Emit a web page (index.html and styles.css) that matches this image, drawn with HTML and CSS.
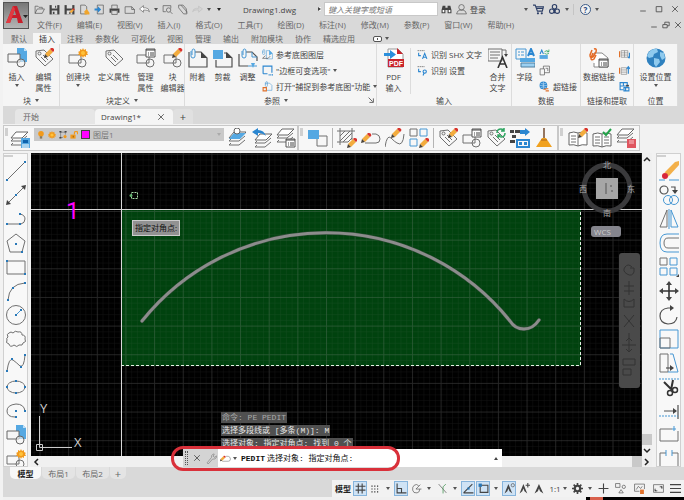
FILE: index.html
```
<!DOCTYPE html>
<html lang="zh-CN">
<head>
    <meta charset="UTF-8">
    <meta name="viewport" content="width=device-width, initial-scale=1.0">
    <title>Drawing1.dwg</title>
    <link rel="stylesheet" href="styles.css">
</head>
<body>
<svg class="sprite" aria-hidden="true">
    <defs>
        <!-- shared parts -->
        <g id="pencil">
            <path d="M1 6l5-5 3 3-5 5z" fill="#f3ac3e"/>
            <path d="M1 6l3 3-4 1z" fill="#4a4238"/>
            <path d="M6 1l1-1q2-.5 3 1t-.5 2.500L9 4z" fill="#d8322c"/>
        </g>
        <g id="stack">
            <path class="ln" fill="#fff" d="M1 13h10l6-5M1 13l2-2M1 17h10l6-5M1 17l2-2"/>
            <path d="M6 4h12l-6 6H1z" fill="#fff" stroke="#666"/>
        </g>
        <g id="tag">
            <path class="ln" d="M2 3l8-1 9 9-8 7-9-9z"/>
            <circle class="ln" cx="5.500" cy="5.500" r="1.500"/>
            <path class="ln" d="M7 9l5 5M9 7l5 5"/>
        </g>
        <g id="shape">
            <path class="ln" d="M1 7h12v8H1z"/>
            <circle class="ln" cx="14" cy="15" r="4"/>
        </g>
        <g id="sun">
            <path d="M5 0l1 2 2-1v2l2 1-1 1 1 2-2 0v2l-2-1-1 2-1-2-2 1V7L0 7l1-2-1-1 2-1V1l2 1z" fill="#f29a1c"/>
            <circle cx="5" cy="5" r="2" fill="#ffc23a"/>
        </g>
        <g id="note">
            <path d="M0 0h9v8H0z" fill="#fff" stroke="#555"/>
            <path d="M0 1h9M2 4h1M4 4h4M2 6h1M4 6h4" stroke="#444" fill="none"/>
        </g>
        <g id="clip">
            <path class="bl" d="M1 3v5q0 2 2 2t2-2V3q0-2-1.500-2T2 3v4"/>
        </g>

        <!-- quick access -->
        <symbol id="i-open" viewBox="0 0 20 20"><path class="dk" d="M2 17V4h5l2 2h6v3M2 17l4-8h13l-4 8z"/></symbol>
        <symbol id="i-save" viewBox="0 0 20 20"><path class="df" d="M1 2h18v17H1z"/><path d="M5 2h10v6H5zM5 12h10v7H5z" fill="#ddd"/><path class="df" d="M11 3h2v4h-2zM7 14h3v4H7z"/></symbol>
        <symbol id="i-saveas" viewBox="0 0 20 20"><path class="df" d="M1 2h18v17H1z"/><path d="M5 2h10v6H5zM5 12h10v7H5z" fill="#ddd"/><use href="#pencil" x="9" y="8"/></symbol>
        <symbol id="i-webopen" viewBox="0 0 20 20"><path class="dk" d="M3 2h8l3 3v13H3z" fill="#fff"/><path d="M10 13l4-4 5 7v3h-9z" fill="#f0a52c"/></symbol>
        <symbol id="i-websave" viewBox="0 0 20 20"><path class="dk" d="M6 2h11v16H6z"/><path d="M1 8h6V4l6 6-6 6v-4H1z" fill="#2b86d0"/></symbol>
        <symbol id="i-print" viewBox="0 0 20 20"><path class="dk" d="M5 8V2h10v6M5 12h10v7H5z"/><path class="df" d="M1 8h18v8h-3v-4H4v4H1z"/></symbol>
        <symbol id="i-page" viewBox="0 0 20 20"><path class="dk" d="M2 5h12l5 5v7H2z" fill="#fff"/><path class="dk" d="M14 5v5h5"/></symbol>
        <symbol id="i-undo" viewBox="0 0 20 20"><path d="M1 9l7-6v4h4q6 0 7 7-3-3-7-3H8v4z" fill="#fff" stroke="#444"/></symbol>
        <symbol id="i-redo" viewBox="0 0 20 20"><path d="M19 9l-7-5v4H8q-6 0-7 6 3-3 7-3h4v4z" fill="#d4d4d4" stroke="#bbb"/></symbol>
        <symbol id="i-preview" viewBox="0 0 20 20"><path class="dk" d="M2 14V3h14v5M2 14h5" fill="#fff"/><circle class="dk" cx="12" cy="11" r="4"/><path class="dk" d="M15 14l4 4"/></symbol>
        <symbol id="i-sheets" viewBox="0 0 20 20"><path class="dk" d="M3 2h8l6 7v7M3 2v5l9 11h6v-4L7 2"/></symbol>

        <!-- info bar -->
        <symbol id="i-find" viewBox="0 0 20 20"><path class="df" d="M3 3h5v4h4V3h5l2 8v6h-7v-6H8v6H1v-6z"/><path d="M3 11h3v4H3zM14 11h3v4h-3z" fill="#fff"/></symbol>
        <symbol id="i-user" viewBox="0 0 20 20"><circle class="dk" cx="10" cy="6" r="5"/><path class="dk" d="M1 18q1-6 6-7h6q5 1 6 7z"/></symbol>
        <symbol id="i-cart" viewBox="0 0 20 20"><path class="nv" d="M0 2h4l4 11h9l2-8H5M7 8h11"/><circle cx="9" cy="17" r="2" fill="#2c3e66"/><circle cx="16" cy="17" r="2" fill="#2c3e66"/></symbol>
        <symbol id="i-cloud" viewBox="0 0 20 20"><circle class="nv" cx="10" cy="5" r="4"/><circle class="nv" cx="5" cy="13" r="4"/><circle class="nv" cx="15" cy="13" r="4"/><path class="nv" d="M10 9v8"/></symbol>
        <symbol id="i-min" viewBox="0 0 20 20"><path class="dk2" d="M3 15h14"/></symbol>
        <symbol id="i-max" viewBox="0 0 20 20"><path class="dk2" d="M3 4h14v13H3z"/></symbol>
        <symbol id="i-restore" viewBox="0 0 20 20"><path class="dk2" d="M2 9h11v8H2zM7 9V3h11v9h-5"/></symbol>
        <symbol id="i-close" viewBox="0 0 20 20"><path class="dk2" d="M3 3l14 14M17 3L3 17"/></symbol>
        <symbol id="i-launch" viewBox="0 0 20 20"><path class="dk2" d="M4 4l10 10M16 6v10H6"/></symbol>

        <!-- scroll arrows -->
        <symbol id="i-up" viewBox="0 0 10 10"><path class="arrow" d="M2 7l3-3 3 3"/></symbol>
        <symbol id="i-down" viewBox="0 0 10 10"><path class="arrow" d="M2 3l3 3 3-3"/></symbol>
        <symbol id="i-left" viewBox="0 0 10 10"><path class="arrow" d="M7 2L4 5l3 3"/></symbol>
        <symbol id="i-right" viewBox="0 0 10 10"><path class="arrow" d="M3 2l3 3-3 3"/></symbol>

        <!-- ribbon -->
        <symbol id="i-insert" viewBox="0 0 20 20"><path class="bf" d="M10 0h7l3 3v11h-10z"/><path d="M17 0v3h3" fill="#bfe0f7"/><path d="M1 6h12v8H1z" fill="#f5f5f5" stroke="#666"/><circle cx="14" cy="15" r="4" fill="#f5f5f5" fill-opacity=".6" stroke="#666"/></symbol>
        <symbol id="i-tag" viewBox="0 0 20 20"><use href="#tag"/></symbol>
        <symbol id="i-tagedit" viewBox="0 0 20 20"><use href="#tag"/><use href="#pencil" x="10"/></symbol>
        <symbol id="i-tagsync" viewBox="0 0 20 20"><use href="#tag"/><path class="gr" d="M11 5q0-4 4-4 2 0 3 2M19 5q0 4-4 4-2 0-3-2M18 0v3h-3M12 10V7h3"/></symbol>
        <symbol id="i-create" viewBox="0 0 20 20"><use href="#shape"/><use href="#sun" x="10"/></symbol>
        <symbol id="i-manage" viewBox="0 0 20 20"><use href="#shape"/><use href="#note" x="10" y="1"/></symbol>
        <symbol id="i-blockedit" viewBox="0 0 20 20"><use href="#shape"/><use href="#pencil" x="9"/></symbol>
        <symbol id="i-attach" viewBox="0 0 20 20"><path class="dk" d="M1 4v15h18V10l-6-6H7"/><path class="df" d="M13 4v6h6z"/><use href="#clip" x="2"/></symbol>
        <symbol id="i-crop" viewBox="0 0 20 20"><path class="dk" d="M3 12v7h16V10l-5-5h-3"/><path class="df" d="M13 4v6h6z"/><path class="bf" d="M0 2h10v9H0z"/></symbol>
        <symbol id="i-adjust" viewBox="0 0 20 20"><path class="dk" d="M1 6v12h9M19 13V9l-5-5H8"/><path class="bl" d="M14 4v5h5M10 18h9"/><path class="bf" d="M13 15h4l-2 5z"/><use href="#clip" x="3"/></symbol>
        <symbol id="i-reflayer" viewBox="0 0 20 20"><path class="bl" d="M8 3h6l5 5v10H8z"/><path class="bf" d="M13 2l6 6-6 4z"/><path class="dk" d="M1 17h10l4-4M1 17l5-5"/><use href="#clip" x="0"/></symbol>
        <symbol id="i-frame" viewBox="0 0 20 20"><path class="bl2" d="M2 16V2h16v12M2 16h8"/><path class="bl2" stroke-dasharray="2 1" d="M12 18h8"/></symbol>
        <symbol id="i-snapref" viewBox="0 0 20 20"><path class="bl" d="M6 4h8l4 4v9H9"/><path d="M2 18v-6h6v6z" fill="none" stroke="#e0702a" stroke-width="2"/><use href="#clip" x="5"/></symbol>
        <symbol id="i-pdf" viewBox="0 0 20 20"><path d="M4 1h10l5 5v13H4z" fill="#fff" stroke="#999"/><path d="M13 0l6 6h-6z" fill="#c9242c"/><path d="M4 11h16v8H4z" fill="#c9242c"/><path d="M0 5h6V2l6 4.500L6 11V8H0z" fill="#2b8fdc"/><text x="5" y="18" class="pdftext">PDF</text></symbol>
        <symbol id="i-shx" viewBox="0 0 20 20"><path class="dk" stroke-dasharray="3 1" d="M1 3h13"/><path class="bl2" d="M3 7v5h4"/><path class="bl2" d="M10 18l4-10 4 10M12 15h4"/></symbol>
        <symbol id="i-shxset" viewBox="0 0 20 20"><path class="dk" stroke-dasharray="3 1" d="M1 3h13"/><path class="bl2" d="M3 7v5h4"/><circle class="bl2" cx="14" cy="12" r="3"/><path class="bl2" d="M11 19l2-5"/></symbol>
        <symbol id="i-merge" viewBox="0 0 20 20"><path class="ln" d="M0 1h14v12H0zM2 4h10M2 7h10M2 10h8M14 2h4v6"/><path class="df" d="M16 6h4l-2 3z"/><path d="M10 20l4.500-11L19 20M12 16h5" fill="none" stroke="#333" stroke-width="1.600"/></symbol>
        <symbol id="i-field" viewBox="0 0 20 20"><path class="bl" d="M1 1h10v10H1zM3 4h2M6 4h3M3 7h2M6 7h3"/><path class="bl2" d="M13 8l3-7 3 7M14 6h4"/><path class="bf" d="M5 10h15v4H5z"/><path d="M6 15h14v4H6z" fill="#9bd0f2" stroke="#4e7f9f"/></symbol>
        <symbol id="i-upd" viewBox="0 0 20 20"><path class="bf" d="M1 11h15v7H1z"/><path class="gr" d="M10 5q4-4 8 0M18 1v4h-4M10 8q4 3 8 0"/><path class="bl2" d="M2 9l3-7 3 7"/></symbol>
        <symbol id="i-ole" viewBox="0 0 20 20"><path class="dk" d="M2 7h8v11H2zM8 7V2h11v12h-9M12 6h4v5"/></symbol>
        <symbol id="i-link" viewBox="0 0 20 20"><circle cx="8" cy="8" r="7" fill="#2b86d0"/><path d="M1 8h14M8 1v14M3 4q5 3 10 0M3 12q5-3 10 0" fill="none" stroke="#cfe8fa"/><path d="M8 15h5M12 18h6M12 14h5" stroke="#e0702a" stroke-width="2"/></symbol>
        <symbol id="i-datalink" viewBox="0 0 20 20"><path d="M5 8V5h8l6 5v9H5v-4" fill="#fff" stroke="#888"/><path d="M5 1q3-1 2 3L4 9q-3 2-3-2l2-5M4 5l-2 5q0 3 3 1l2-4" fill="none" stroke="#e56a24" stroke-width="1.500"/><use href="#note" x="10" y="11"/></symbol>
        <symbol id="i-dl1" viewBox="0 0 20 20"><path class="ln" d="M4 3h12v12H4zM4 7h12M4 11h12M10 3v12"/><path d="M1 4v11" stroke="#e0702a" stroke-width="2"/><path class="bl2" d="M19 7v9M16 14l3 3"/></symbol>
        <symbol id="i-dl2" viewBox="0 0 20 20"><path class="ln" d="M4 5h10v12H4zM4 9h10M4 13h10"/><path d="M1 5v11" stroke="#e0702a" stroke-width="2"/><path class="bl2" d="M17 16V5M14 7l3-4 3 4"/></symbol>
        <symbol id="i-dl3" viewBox="0 0 20 20"><path class="bl2" d="M2 3h13v6H2zM8 3v6M2 9v7h6"/><path class="bl2" d="M9 12h9v6H9zM12 12v6"/><path class="df" d="M13 7h5v3h-5z"/></symbol>
        <symbol id="i-globe" viewBox="0 0 20 20"><circle cx="10" cy="10" r="9.500" fill="#2f81bf"/><path d="M3 4q4-4 8-3l1 3-4 2-1 3-4 1-2-2zM8 10l5 1 1 3-4 5-2-3zM14 4l4 1 1 5-3 2-2-4z" fill="#8fcaee"/></symbol>

        <!-- object toolbar -->
        <symbol id="i-layers" viewBox="0 0 20 20"><use href="#stack"/><path class="bf" d="M11 10h9v10h-9z"/><path d="M13 12h5v3h-5z" fill="#0d62ad"/><path d="M12 17h7M12 19h7" stroke="#fff"/></symbol>
        <symbol id="i-layercur" viewBox="0 0 20 20"><use href="#stack"/><path class="bf" d="M6 5h12l-6 6H1z"/><circle cx="9" cy="3" r="3" fill="#fff" stroke="#666"/></symbol>
        <symbol id="i-layerprev" viewBox="0 0 20 20"><use href="#stack" x="2" y="2"/><path d="M0 4l6-4v2q6 0 8 6-3-3-8-3v3z" fill="#2b86d0"/></symbol>
        <symbol id="i-layerstate" viewBox="0 0 20 20"><use href="#stack" y="-3"/><use href="#note" x="10" y="11"/></symbol>
        <symbol id="i-layerred" viewBox="0 0 20 20"><use href="#stack" y="-3"/><path d="M11 11h9v9h-9z" fill="#df5660"/><path d="M13 13h5M13 15h5" stroke="#fbc6ca"/></symbol>
        <symbol id="i-match" viewBox="0 0 20 20"><path class="ln" d="M9 8h10v10H9z"/><path class="bf" d="M0 2h11v9H0z"/></symbol>
        <symbol id="i-hatch" viewBox="0 0 20 20"><path class="ln" d="M3 0v17M15 0v12M0 3h18M0 14h11M3 8l5-5M3 13L13 3M6 14l9-9M11 14l4-4"/><use href="#pencil" x="10" y="10"/></symbol>
        <symbol id="i-pledit" viewBox="0 0 20 20"><path class="ln" d="M4 15h11q4 0 4-4t-4-5h-4"/><use href="#pencil" x="0" y="5"/></symbol>
        <symbol id="i-spledit" viewBox="0 0 20 20"><path class="ln" d="M0 19q2-13 6-9t6 5q6 4 7-9"/><use href="#pencil" x="6" y="0"/></symbol>
        <symbol id="i-arredit" viewBox="0 0 20 20"><path class="ln" d="M1 1h7v7H1z"/><path class="bl" d="M11 1h7v7h-7zM1 11h7v7H1z"/><use href="#pencil" x="10" y="10"/></symbol>
        <symbol id="i-list" viewBox="0 0 20 20"><path class="df" d="M0 2h4v3H0zM5 2h5v3H5zM2 7h4v3H2zM0 12h5v3H0z"/><path d="M10 2h5V0l5 4-5 4V6h-5z" fill="#2b86d0"/><path class="bl2" d="M7 12h12v7H7z"/><path d="M9 14h3v3H9zM14 14h3v3h-3z" fill="#2b86d0"/></symbol>
        <symbol id="i-broom" viewBox="0 0 20 20"><path d="M10 0v11" stroke="#754a2e" stroke-width="1.500"/><path d="M8 10h4l6 9H2z" fill="#f0a11f"/><path d="M7 12h6" stroke="#a9651c"/></symbol>
        <symbol id="i-book" viewBox="0 0 20 20"><path d="M1 5q5-2 9 0 4-2 9 0v12q-5-1-9 1-4-2-9-1z" fill="#fff" stroke="#666"/><path class="ln" d="M10 5v13M3 8h5M3 11h5M3 14h5"/><use href="#pencil" x="10"/></symbol>
        <symbol id="i-bookok" viewBox="0 0 20 20"><path d="M1 6q5-2 9 0 4-2 9 0v12q-5-1-9 1-4-2-9-1z" fill="#fff" stroke="#666"/><path class="ln" d="M10 6v13M3 9h5M3 12h5M3 15h5M12 9h5M12 12h5M12 15h5"/><path d="M11 4l3 3 5-6" fill="none" stroke="#23a34a" stroke-width="2"/></symbol>

        <!-- layer list -->
        <symbol id="i-bulb" viewBox="0 0 20 20"><circle cx="10" cy="7" r="7" fill="#f29a1c"/><path d="M7 13h6v6H7z" fill="#8a7a5c"/></symbol>
        <symbol id="i-sun" viewBox="0 0 10 10"><use href="#sun"/></symbol>
        <symbol id="i-vp" viewBox="0 0 20 20"><path class="dk" d="M4 2v14M4 3h12M16 3v6M4 16h6"/><path class="df" d="M1 0h5v4H1zM14 0h5v4h-5zM1 15h5v4H1z"/><circle cx="15" cy="14" r="4" fill="#f29a1c"/></symbol>
        <symbol id="i-lock" viewBox="0 0 20 20"><path d="M1 9h13v10H1z" fill="#f29a1c"/><path d="M11 9V5q0-4 4-4t4 4v3" fill="none" stroke="#f29a1c" stroke-width="3"/><path d="M7 12h2v4H7z" fill="#7b5214"/></symbol>

        <!-- draw toolbar -->
        <symbol id="i-line" viewBox="0 0 20 20"><path class="ln" d="M1 19L19 1"/><path class="pt" d="M0 18h2v2H0zM18 0h2v2h-2z"/></symbol>
        <symbol id="i-xline" viewBox="0 0 20 20"><path class="ln" d="M2 18L18 2"/><path class="df" d="M0 20l1-5 4 4zM20 0l-1 5-4-4z"/><path class="pt" d="M9 9h2v2H9z"/></symbol>
        <symbol id="i-pline" viewBox="0 0 20 20"><path class="ln" d="M1 15h14q4-1 4-5t-5-5"/><path class="pt" d="M0 14h2v2H0zM13 14h2v2h-2zM13 4h2v2h-2z"/></symbol>
        <symbol id="i-polygon" viewBox="0 0 20 20"><path class="ln" d="M10 1l9 7-3 11H4L1 8z"/><path class="pt" d="M9 10h2v2H9zM15 18h2v2h-2z"/></symbol>
        <symbol id="i-rect" viewBox="0 0 20 20"><path class="ln" d="M1 4h18v13H1z"/><path class="pt" d="M0 3h2v2H0zM18 16h2v2h-2z"/></symbol>
        <symbol id="i-arc" viewBox="0 0 20 20"><path class="ln" d="M2 19Q3 3 19 2"/><path class="pt" d="M1 18h2v2H1zM6 6h2v2H6zM18 1h2v2h-2z"/></symbol>
        <symbol id="i-circle" viewBox="0 0 20 20"><circle class="ln" cx="10" cy="10" r="9.500"/><path class="bl" d="M10 10l5-5"/><path class="pt" d="M9 9h2v2H9zM14 4h2v2h-2z"/></symbol>
        <symbol id="i-revcloud" viewBox="0 0 20 20"><path class="ln" d="M2 8q-2-3 1-4 2-2 4 0 2-3 5-1 4-1 4 3 4 0 3 4 2 3-2 4 0 3-4 2-2 3-5 0-4 3-5-1-4-1-2-4-1-2 1-3z"/></symbol>
        <symbol id="i-spline" viewBox="0 0 20 20"><path class="ln" d="M1 18Q3 4 7 7t7 6q4 2 5-11"/><path class="pt" d="M0 17h2v2H0zM5 5h2v2H5zM14 13h2v2h-2zM18 1h2v2h-2z"/></symbol>
        <symbol id="i-ellipse" viewBox="0 0 20 20"><ellipse class="ln" cx="10" cy="10" rx="9" ry="6"/><path class="pt" d="M0 9h2v2H0zM18 9h2v2h-2zM9 3h2v2H9zM9 15h2v2H9z"/></symbol>
        <symbol id="i-earc" viewBox="0 0 20 20"><path class="ln" d="M9 16Q1 16 1 10t9-7q8 0 9 7"/><path class="pt" d="M9 9h2v2H9zM18 9h2v2h-2zM9 15h2v2H9z"/></symbol>

        <!-- modify toolbar -->
        <symbol id="i-erase" viewBox="0 0 20 20"><path d="M5 12L16 1l4-1v4L9 16z" fill="#f3b04a"/><path d="M5 12l4 4" stroke="#fff" stroke-width="2"/><circle cx="6" cy="15" r="3" fill="#d8263a"/><path class="bl" d="M0 19h6M10 19h10"/></symbol>
        <symbol id="i-copy" viewBox="0 0 20 20"><circle class="dk" cx="5" cy="5" r="4"/><path class="dk" d="M12 2h4v4"/><path class="df" d="M13 5h6l-3 4z"/><circle class="bl" cx="9" cy="15" r="4.500"/><circle class="bl" cx="15" cy="15" r="4.500"/></symbol>
        <symbol id="i-mirror" viewBox="0 0 20 20"><path class="ln" d="M8 1v17H1z"/><path class="bl" d="M12 1v17h7z"/><path class="bl" d="M10 0v20"/></symbol>
        <symbol id="i-offset" viewBox="0 0 20 20"><path class="bl" d="M20 1H8Q1 1 1 10t7 9h12"/><path class="ln" d="M20 5H9q-4 0-4 5t4 5h11"/></symbol>
        <symbol id="i-array" viewBox="0 0 20 20"><path class="ln" d="M1 1h7v7H1z"/><path class="bl" d="M11 1h7v7h-7zM1 11h7v7H1zM11 11h7v7h-7z"/><path class="df" d="M17 20l3-3v3z"/></symbol>
        <symbol id="i-move" viewBox="0 0 20 20"><path d="M10 3v14M3 10h14" stroke="#333" stroke-width="1.600"/><path class="df" d="M10 0l3 4H7zM10 20l3-4H7zM0 10l4-3v6zM20 10l-4-3v6z"/></symbol>
        <symbol id="i-rotate" viewBox="0 0 20 20"><path class="dk" d="M12 3H9Q1 4 1 11t8 8q8 0 9-7"/><path class="df" d="M11 0l4 3-4 3z"/></symbol>
        <symbol id="i-scale" viewBox="0 0 20 20"><path class="bl" d="M1 1h18v18H1z"/><path class="ln" d="M1 9h10v10H1z"/></symbol>
        <symbol id="i-stretch" viewBox="0 0 20 20"><path class="ln" d="M9 1H1v18h8z"/><path class="bl" d="M11 1h3l5 18H9"/><path class="dk" d="M7 15h5"/><path class="df" d="M11 12l4 3-4 3z"/></symbol>
        <symbol id="i-trim" viewBox="0 0 20 20"><path class="bl" stroke-dasharray="2 1" d="M0 2h20"/><path d="M5 5l8 8M14 3l-2 10" stroke="#333" stroke-width="2"/><circle cx="11" cy="16" r="2.500" fill="none" stroke="#333" stroke-width="1.500"/><circle cx="16" cy="13" r="2.500" fill="none" stroke="#333" stroke-width="1.500"/></symbol>
        <symbol id="i-extend" viewBox="0 0 20 20"><path class="dk" d="M5 10h12M19 4v14"/><path class="df" d="M14 7l4 3-4 3z"/><path class="bl" stroke-dasharray="2 1" d="M0 15h19"/></symbol>
        <symbol id="i-breakpt" viewBox="0 0 20 20"><path class="ln" d="M13 4H1v12h18V6"/><path class="bl" d="M13 4h4M15 1v5"/></symbol>
        <symbol id="i-break" viewBox="0 0 20 20"><path class="ln" d="M7 4H1v16M13 4h6v16"/><path class="bl" d="M7 1v6M13 1v6"/></symbol>

        <!-- command line and status bar -->
        <symbol id="i-wrench" viewBox="0 0 20 20"><path class="ln" d="M2 18l8-10q-1-4 3-6l2 0-2 4 3 2 3-3q1 5-4 6l-3 0-8 9z"/></symbol>
        <symbol id="i-grid" viewBox="0 0 20 20"><path class="dk2" d="M6 1v18M13 1v18M1 6h18M1 13h18"/></symbol>
        <symbol id="i-dots" viewBox="0 0 20 20"><path d="M1 3h18M1 10h18M1 17h18" stroke="#333" stroke-width="3" stroke-dasharray="3 4"/></symbol>
        <symbol id="i-ortho" viewBox="0 0 20 20"><path class="dk2" d="M2 1v17h17M2 10h8v8"/></symbol>
        <symbol id="i-polar" viewBox="0 0 20 20"><path class="dk" d="M14 5Q10 1 6 4t-3 9 8 5q5-1 5-7M9 11l8-8M9 11h10"/></symbol>
        <symbol id="i-iso" viewBox="0 0 20 20"><path class="dk" d="M3 2l14 16"/><path d="M11 19V7l5-5" fill="none" stroke="#4e9a5c" stroke-width="1.500"/></symbol>
        <symbol id="i-track" viewBox="0 0 20 20"><path class="dk2" d="M1 18L17 2M1 18h18"/><path class="pt" d="M8 8h4v4H8z"/></symbol>
        <symbol id="i-osnap" viewBox="0 0 20 20"><path class="dk2" d="M4 4h14v13H4z"/><path class="pt" d="M1 1h6v6H1z"/></symbol>
        <symbol id="i-ann" viewBox="0 0 20 20"><path class="df" d="M9 2l8 17-6-4-2-5-2 5-6 4z"/></symbol>
        <symbol id="i-anno" viewBox="0 0 20 20"><path class="df" d="M8 2l7 17-5-4-2-5-2 5-5 4z"/><circle class="dk" cx="16" cy="4" r="3"/></symbol>
        <symbol id="i-annx" viewBox="0 0 20 20"><path class="df" d="M8 2l7 17-5-4-2-5-2 5-5 4z"/><path class="dk2" d="M16 0v8M12 4h8"/></symbol>
        <symbol id="i-gear" viewBox="0 0 20 20"><circle cx="10" cy="10" r="5" fill="none" stroke="#444" stroke-width="4"/><path d="M10 0v4M10 16v4M0 10h4M16 10h4M3 3l3 3M14 14l3 3M17 3l-3 3M3 17l3-3" stroke="#444" stroke-width="3"/></symbol>
        <symbol id="i-plus" viewBox="0 0 20 20"><path class="dk2" d="M10 1v18M1 10h18"/></symbol>
        <symbol id="i-isolate" viewBox="0 0 20 20"><path class="dk" d="M1 1h8v7H1zM7 18l4-6 4 6z"/><circle class="dk" cx="16" cy="7" r="3"/></symbol>
        <symbol id="i-hw" viewBox="0 0 20 20"><path class="dk" d="M1 2h18v9M1 2v13h9M4 12l4-6 4 4 3-4"/><path d="M11 12h7v8h-7z" fill="#e0702a"/></symbol>
        <symbol id="i-clean" viewBox="0 0 20 20"><path class="dk" d="M1 3h18v14H1zM12 7h4v4M8 14H4v-4"/><path class="df" d="M13 6h4v4zM3 11v4h4z"/></symbol>
        <symbol id="i-menu" viewBox="0 0 20 20"><path class="dk2" d="M0 3h20M0 10h20M0 17h20"/></symbol>
    </defs>
</svg>

<div class="app">
    <header class="head">
        <button class="logo" aria-label="应用程序菜单">
            <svg viewBox="0 0 26 27"><path d="M3 21L10 4h4l6 17h-5l-1-5H9l-2 5zM10 13h3l-1.500-5z" fill="#c81f2b"/><path d="M3 21L10 4l2 3-5 14z" fill="#e23a41"/><path d="M20 13h5l-2.500 3z" fill="#222"/></svg>
        </button>
        <div class="head-rows">
            <div class="titlebar">
                <div class="quick">
                    <button aria-label="打开"><svg class="ic s"><use href="#i-open"/></svg></button>
                    <button aria-label="保存"><svg class="ic s"><use href="#i-save"/></svg></button>
                    <button aria-label="另存为"><svg class="ic s"><use href="#i-saveas"/></svg></button>
                    <button aria-label="从云打开"><svg class="ic s"><use href="#i-webopen"/></svg></button>
                    <button aria-label="保存到云"><svg class="ic s"><use href="#i-websave"/></svg></button>
                    <button aria-label="打印"><svg class="ic s"><use href="#i-print"/></svg></button>
                    <button aria-label="新建"><svg class="ic s"><use href="#i-page"/></svg></button>
                    <button aria-label="放弃"><svg class="ic s"><use href="#i-undo"/></svg></button>
                    <i class="caret"></i>
                    <button aria-label="预览"><svg class="ic s"><use href="#i-preview"/></svg></button>
                    <button aria-label="图纸集"><svg class="ic s"><use href="#i-sheets"/></svg></button>
                    <button aria-label="重做"><svg class="ic s"><use href="#i-redo"/></svg></button>
                    <i class="caret"></i>
                    <i class="caret more"></i>
                </div>
                <div class="doc-title">Drawing1.dwg</div>
                <i class="caret side"></i>
                <input class="search" type="text" placeholder="键入关键字或短语" aria-label="搜索">
                <div class="account">
                    <button aria-label="查找"><svg class="ic s"><use href="#i-find"/></svg></button>
                    <button><svg class="ic s"><use href="#i-user"/></svg><span>登录</span></button>
                </div>
                <div class="store">
                    <i class="caret"></i>
                    <button aria-label="商店"><svg class="ic s"><use href="#i-cart"/></svg></button>
                    <button aria-label="云"><svg class="ic s"><use href="#i-cloud"/></svg></button>
                    <i class="caret"></i>
                </div>
                <div class="help">
                    <button class="q">?</button>
                    <i class="caret"></i>
                </div>
                <div class="win">
                    <button aria-label="最小化"><svg class="ic xs"><use href="#i-min"/></svg></button>
                    <button aria-label="最大化"><svg class="ic xs"><use href="#i-max"/></svg></button>
                    <button aria-label="关闭"><svg class="ic xs"><use href="#i-close"/></svg></button>
                </div>
            </div>
            <div class="menubar">
                <button>文件(F)</button>
                <button>编辑(E)</button>
                <button>视图(V)</button>
                <button>插入(I)</button>
                <button>格式(O)</button>
                <button>工具(T)</button>
                <button>绘图(D)</button>
                <button>标注(N)</button>
                <button>修改(M)</button>
                <button>参数(P)</button>
                <button>窗口(W)</button>
                <button>帮助(H)</button>
                <div class="win small">
                    <button aria-label="最小化图形"><svg class="ic xs"><use href="#i-min"/></svg></button>
                    <button aria-label="还原图形"><svg class="ic xs"><use href="#i-restore"/></svg></button>
                    <button aria-label="关闭图形"><svg class="ic xs"><use href="#i-close"/></svg></button>
                </div>
            </div>
        </div>
    </header>

    <nav class="ribbon-tabs">
        <button>默认</button>
        <button class="active">插入</button>
        <button>注释</button>
        <button>参数化</button>
        <button>可视化</button>
        <button>视图</button>
        <button>管理</button>
        <button>输出</button>
        <button>附加模块</button>
        <button>协作</button>
        <button>精选应用</button>
        <button class="toggle" aria-label="最小化功能区"><span></span><i class="caret"></i></button>
    </nav>

    <section class="ribbon">
        <div class="panel">
            <div class="tools">
                <button class="big"><svg class="ic l"><use href="#i-insert"/></svg><span>插入</span><i class="caret"></i></button>
                <button class="big"><svg class="ic l"><use href="#i-tagedit"/></svg><span>编辑</span><span>属性</span></button>
            </div>
            <button class="name">块 <i class="caret"></i></button>
        </div>
        <div class="panel">
            <div class="tools">
                <button class="big wide"><svg class="ic l"><use href="#i-create"/></svg><span>创建块</span><i class="caret"></i></button>
                <button class="big wide"><svg class="ic l"><use href="#i-tag"/></svg><span>定义属性</span></button>
                <button class="big"><svg class="ic l"><use href="#i-manage"/></svg><span>管理</span><span>属性</span></button>
                <button class="big"><svg class="ic l"><use href="#i-blockedit"/></svg><span>块</span><span>编辑器</span></button>
            </div>
            <button class="name">块定义 <i class="caret"></i></button>
        </div>
        <div class="panel">
            <div class="tools">
                <button class="big narrow"><svg class="ic l"><use href="#i-attach"/></svg><span>附着</span></button>
                <button class="big narrow"><svg class="ic l"><use href="#i-crop"/></svg><span>剪裁</span></button>
                <button class="big narrow"><svg class="ic l"><use href="#i-adjust"/></svg><span>调整</span></button>
                <div class="rows">
                    <button><svg class="ic s"><use href="#i-reflayer"/></svg><span>参考底图图层</span></button>
                    <button><svg class="ic s"><use href="#i-frame"/></svg><span>"边框可变选项"</span><i class="caret"></i></button>
                    <button><svg class="ic s"><use href="#i-snapref"/></svg><span>打开"捕捉到参考底图"功能</span><i class="caret"></i></button>
                </div>
            </div>
            <div class="name-row">
                <button class="name">参照 <i class="caret"></i></button>
                <button aria-label="参照设置"><svg class="ic xs"><use href="#i-launch"/></svg></button>
            </div>
        </div>
        <div class="panel">
            <div class="tools">
                <button class="big divided"><svg class="ic l"><use href="#i-pdf"/></svg><span>PDF</span><span>输入</span></button>
                <div class="rows">
                    <button><svg class="ic s"><use href="#i-shx"/></svg><span>识别 SHX 文字</span></button>
                    <button><svg class="ic s"><use href="#i-shxset"/></svg><span>识别 设置</span></button>
                </div>
                <button class="big"><svg class="ic l"><use href="#i-merge"/></svg><span>合并</span><span>文字</span></button>
            </div>
            <div class="name">输入</div>
        </div>
        <div class="panel">
            <div class="tools">
                <button class="big narrow"><svg class="ic l"><use href="#i-field"/></svg><span>字段</span></button>
                <div class="rows">
                    <button aria-label="更新字段"><svg class="ic s"><use href="#i-upd"/></svg></button>
                    <button aria-label="OLE 对象"><svg class="ic s"><use href="#i-ole"/></svg></button>
                    <button><svg class="ic s"><use href="#i-link"/></svg><span>超链接</span></button>
                </div>
            </div>
            <div class="name">数据</div>
        </div>
        <div class="panel">
            <div class="tools">
                <button class="big wide"><svg class="ic l"><use href="#i-datalink"/></svg><span>数据链接</span></button>
                <div class="rows">
                    <button aria-label="从源下载"><svg class="ic s"><use href="#i-dl1"/></svg></button>
                    <button aria-label="上载到源"><svg class="ic s"><use href="#i-dl2"/></svg></button>
                    <button aria-label="提取数据"><svg class="ic s"><use href="#i-dl3"/></svg></button>
                </div>
            </div>
            <div class="name">链接和提取</div>
        </div>
        <div class="panel">
            <div class="tools center">
                <button class="big wide"><svg class="ic l"><use href="#i-globe"/></svg><span>设置位置</span><i class="caret"></i></button>
            </div>
            <div class="name">位置</div>
        </div>
    </section>

    <nav class="file-tabs">
        <button class="start">开始</button>
        <button class="active"><span>Drawing1*</span><svg class="ic t"><use href="#i-close"/></svg></button>
        <button class="add" aria-label="新图形">+</button>
    </nav>

    <section class="toolbars">
        <div class="bar layers">
            <i class="grip"></i>
            <button aria-label="图层特性"><svg class="ic l"><use href="#i-layers"/></svg></button>
            <div class="layer-box">
                <svg class="ic t"><use href="#i-bulb"/></svg>
                <svg class="ic t"><use href="#i-sun"/></svg>
                <svg class="ic t"><use href="#i-vp"/></svg>
                <svg class="ic t"><use href="#i-lock"/></svg>
                <i class="swatch"></i>
                <select aria-label="图层"><option>图层1</option></select>
                <i class="caret"></i>
            </div>
            <button aria-label="置为当前"><svg class="ic l"><use href="#i-layercur"/></svg></button>
            <button aria-label="上一个图层"><svg class="ic l"><use href="#i-layerprev"/></svg></button>
            <button aria-label="图层状态"><svg class="ic l"><use href="#i-layerstate"/></svg></button>
        </div>
        <div class="bar">
            <i class="grip"></i>
            <button aria-label="绘图次序"><svg class="ic l"><use href="#i-match"/></svg></button>
            <i class="sep"></i>
            <button aria-label="编辑图案填充"><svg class="ic l"><use href="#i-hatch"/></svg></button>
            <button aria-label="编辑多段线"><svg class="ic l"><use href="#i-pledit"/></svg></button>
            <button aria-label="编辑样条曲线"><svg class="ic l"><use href="#i-spledit"/></svg></button>
            <button aria-label="编辑阵列"><svg class="ic l"><use href="#i-arredit"/></svg></button>
            <i class="sep"></i>
            <button aria-label="编辑属性"><svg class="ic l"><use href="#i-tagedit"/></svg></button>
            <button aria-label="块属性管理器"><svg class="ic l"><use href="#i-manage"/></svg></button>
            <button aria-label="同步属性"><svg class="ic l"><use href="#i-tagsync"/></svg></button>
            <button aria-label="数据提取"><svg class="ic l"><use href="#i-list"/></svg></button>
            <button aria-label="清理"><svg class="ic l"><use href="#i-broom"/></svg></button>
        </div>
        <div class="bar">
            <i class="grip"></i>
            <button aria-label="编辑参照"><svg class="ic l"><use href="#i-book"/></svg></button>
            <button aria-label="保存参照"><svg class="ic l"><use href="#i-bookok"/></svg></button>
            <button aria-label="图层清除"><svg class="ic l"><use href="#i-layerred"/></svg></button>
        </div>
    </section>

    <main class="work">
        <div class="side">
            <i class="grip"></i>
            <button aria-label="直线"><svg class="ic l"><use href="#i-line"/></svg></button>
            <button aria-label="构造线"><svg class="ic l"><use href="#i-xline"/></svg></button>
            <button aria-label="多段线"><svg class="ic l"><use href="#i-pline"/></svg></button>
            <button aria-label="多边形"><svg class="ic l"><use href="#i-polygon"/></svg></button>
            <button aria-label="矩形"><svg class="ic l"><use href="#i-rect"/></svg></button>
            <button aria-label="圆弧"><svg class="ic l"><use href="#i-arc"/></svg></button>
            <button aria-label="圆"><svg class="ic l"><use href="#i-circle"/></svg></button>
            <button aria-label="修订云线"><svg class="ic l"><use href="#i-revcloud"/></svg></button>
            <button aria-label="样条曲线"><svg class="ic l"><use href="#i-spline"/></svg></button>
            <button aria-label="椭圆"><svg class="ic l"><use href="#i-ellipse"/></svg></button>
            <button aria-label="椭圆弧"><svg class="ic l"><use href="#i-earc"/></svg></button>
            <button aria-label="插入块"><svg class="ic l"><use href="#i-insert"/></svg></button>
            <button aria-label="创建块"><svg class="ic l"><use href="#i-create"/></svg></button>
        </div>

        <div class="canvas">
            <svg class="drawing">
                <defs>
                    <pattern id="minor" x="8.500" y="0.700" width="5.730" height="5.730" patternUnits="userSpaceOnUse"><path d="M0 0H6M0 0V6" class="minor"/></pattern>
                    <pattern id="major" x="8.500" y="0.700" width="28.650" height="28.650" patternUnits="userSpaceOnUse"><path d="M0 .5H29M.5 0V29" class="major"/></pattern>
                </defs>
                <rect x="91" y="57" width="459" height="156" fill="#00420e"/>
                <rect width="100%" height="100%" fill="url(#minor)"/>
                <rect width="100%" height="100%" fill="url(#major)"/>
                <path d="M0 56.500H611M90.500 0V303" class="cross"/>
                <path d="M90 212.500H549.500V57" class="window"/>
                <path d="M111 168A236 236 0 0 1 479 168Q484 176 493 176Q502 176 508 167" class="arc-back"/>
                <path d="M111 168A236 236 0 0 1 479 168Q484 176 493 176Q502 176 508 167" class="arc"/>
                <text x="35" y="66" class="label-one">1</text>
                <rect x="100.500" y="39.500" width="6" height="6" class="pick"/>
                <circle cx="100" cy="42.500" r="1.500" fill="#5fae6b"/>
                <path d="M8.500 263V294.500H41M5.500 291.500h6v6h-6z" class="ucs"/>
                <text x="9" y="260" class="axis">Y</text>
                <text x="43" y="294" class="axis">X</text>
            </svg>
            <div class="tip">指定对角点:</div>
            <svg class="cube" viewBox="0 0 60 60">
                <circle cx="30" cy="30" r="23" fill="none" stroke="#3a3a3c" stroke-width="5"/>
                <path d="M19 20h22v21H19z" fill="#a6a6a6"/>
                <path d="M29 25v11M34 27v2M34 33h2" stroke="#555" fill="none"/>
                <text x="30" y="10">北</text>
                <text x="6" y="34">西</text>
                <text x="54" y="34">东</text>
                <text x="30" y="58">南</text>
            </svg>
            <button class="wcs">WCS</button>
            <div class="navbar">
                <svg viewBox="0 0 20 130"><path d="M13 14q-4-4-7 0t2 7 7-2v-4h-4M5 33h10M5 38h10M10 28v14M5 46q5 5 10 0v8H5zM5 62l10 12M15 62L5 74M10 80v5M3 92h14M10 85v14M10 85l-3 3M10 85l3 3M7 96l3 3 3-3M4 106h12v6H4zM4 116h8v6H4z"/></svg>
            </div>
            <div class="history">
                <p class="old">命令: PE PEDIT</p>
                <p>选择多段线或 [多条(M)]: M</p>
                <p>选择对象: 指定对角点: 找到 0 个</p>
            </div>
        </div>
        <div class="scroll v">
            <button aria-label="向上"><svg class="ic a"><use href="#i-up"/></svg></button>
            <i class="thumb"></i>
            <button aria-label="向下"><svg class="ic a"><use href="#i-down"/></svg></button>
        </div>
        <div class="scroll h">
            <button aria-label="向左"><svg class="ic a"><use href="#i-left"/></svg></button>
            <i class="thumb"></i>
            <button aria-label="向右"><svg class="ic a"><use href="#i-right"/></svg></button>
        </div>

        <div class="side right">
            <i class="grip"></i>
            <button aria-label="删除"><svg class="ic l"><use href="#i-erase"/></svg></button>
            <button aria-label="复制"><svg class="ic l"><use href="#i-copy"/></svg></button>
            <button aria-label="镜像"><svg class="ic l"><use href="#i-mirror"/></svg></button>
            <button aria-label="偏移"><svg class="ic l"><use href="#i-offset"/></svg></button>
            <button aria-label="阵列"><svg class="ic l"><use href="#i-array"/></svg></button>
            <button aria-label="移动"><svg class="ic l"><use href="#i-move"/></svg></button>
            <button aria-label="旋转"><svg class="ic l"><use href="#i-rotate"/></svg></button>
            <button aria-label="缩放"><svg class="ic l"><use href="#i-scale"/></svg></button>
            <button aria-label="拉伸"><svg class="ic l"><use href="#i-stretch"/></svg></button>
            <button aria-label="修剪"><svg class="ic l"><use href="#i-trim"/></svg></button>
            <button aria-label="延伸"><svg class="ic l"><use href="#i-extend"/></svg></button>
            <button aria-label="打断于点"><svg class="ic l"><use href="#i-breakpt"/></svg></button>
            <button aria-label="打断"><svg class="ic l"><use href="#i-break"/></svg></button>
        </div>

        <div class="command">
            <div class="cmd-tools">
                <i class="dotgrip"></i>
                <button aria-label="关闭命令行"><svg class="ic t"><use href="#i-close"/></svg></button>
                <button aria-label="自定义"><svg class="ic s"><use href="#i-wrench"/></svg></button>
            </div>
            <svg class="ic s"><use href="#i-pledit"/></svg>
            <i class="caret"></i>
            <label for="cmd">PEDIT</label>
            <input id="cmd" type="text" value="选择对象: 指定对角点:">
            <i class="caret up"></i>
        </div>
        <div class="ring"></div>
    </main>

    <nav class="layout-tabs">
        <button class="active">模型</button>
        <button>布局1</button>
        <button>布局2</button>
        <button class="add" aria-label="新建布局">+</button>
    </nav>

    <footer class="status">
        <div class="status-items">
            <button class="model">模型</button>
            <button class="on" aria-label="栅格"><svg class="ic s"><use href="#i-grid"/></svg></button>
            <button aria-label="捕捉"><svg class="ic xs"><use href="#i-dots"/></svg></button>
            <i class="caret"></i>
            <button class="on" aria-label="正交"><svg class="ic s"><use href="#i-ortho"/></svg></button>
            <button aria-label="极轴"><svg class="ic s"><use href="#i-polar"/></svg></button>
            <i class="caret"></i>
            <button aria-label="等轴测"><svg class="ic s"><use href="#i-iso"/></svg></button>
            <i class="caret"></i>
            <button class="on" aria-label="对象捕捉追踪"><svg class="ic s"><use href="#i-track"/></svg></button>
            <button class="on" aria-label="对象捕捉"><svg class="ic s"><use href="#i-osnap"/></svg></button>
            <i class="caret"></i>
            <button class="on" aria-label="注释可见性"><svg class="ic s"><use href="#i-anno"/></svg></button>
            <button aria-label="自动缩放"><svg class="ic s"><use href="#i-annx"/></svg></button>
            <button aria-label="注释比例"><svg class="ic s"><use href="#i-ann"/></svg></button>
            <button class="ratio">1:1<i class="caret"></i></button>
            <button aria-label="工作空间"><svg class="ic s"><use href="#i-gear"/></svg></button>
            <i class="caret"></i>
            <button aria-label="注释监视器"><svg class="ic s"><use href="#i-plus"/></svg></button>
            <button class="roomy" aria-label="隔离对象"><svg class="ic s"><use href="#i-isolate"/></svg></button>
            <button class="roomy" aria-label="硬件加速"><svg class="ic s"><use href="#i-hw"/></svg></button>
            <button class="roomy" aria-label="全屏显示"><svg class="ic s"><use href="#i-clean"/></svg></button>
            <button aria-label="自定义"><svg class="ic s"><use href="#i-menu"/></svg></button>
        </div>
    </footer>
    <div class="edge"><span><i></i></span></div>
</div>
</body>
</html>
```
FILE: styles.css
```
* {
    box-sizing: border-box;
}

body {
    margin: 0;
    font-family: "Open Sans", "Noto Sans CJK SC", sans-serif;
    font-size: 8px;
    line-height: 11px;
    color: #444;
    background: #d9d9d9;
}

button, input, select {
    font: inherit;
    color: inherit;
    border: 0;
    padding: 0;
    margin: 0;
    background: none;
    border-radius: 0;
}

button {
    display: flex;
    align-items: center;
    justify-content: center;
    white-space: nowrap;
    flex: none;
}

p {
    margin: 0;
}

.sprite {
    position: absolute;
    width: 0;
    height: 0;
}

/* icons */
.ic { display: block; flex: none; }
.ic.l { width: 20px; height: 20px; }
.ic.s { width: 11px; height: 11px; }
.ic.xs { width: 8px; height: 8px; }
.ic.t { width: 8px; height: 8px; }
.ic.a { width: 10px; height: 10px; }

.ln { fill: none; stroke: #707070; }
.dk { fill: none; stroke: #505050; stroke-width: 1.2; }
.dk2 { fill: none; stroke: #444; stroke-width: 2; }
.nv { fill: none; stroke: #2c3e66; stroke-width: 2; }
.bl { fill: none; stroke: #4697d3; }
.bl2 { fill: none; stroke: #2b86d0; stroke-width: 2; }
.gr { fill: none; stroke: #2fa561; stroke-width: 1.5; }
.bf { fill: #55a8e2; }
.df { fill: #444; }
.pt { fill: #2878b8; }
.arrow { fill: none; stroke: #222; stroke-width: 1.5; }
.pdftext { font: bold 7px "Liberation Sans", sans-serif; fill: #fff; }

.caret {
    flex: none;
    width: 0;
    height: 0;
    border: 2px solid transparent;
    border-top: 3px solid #555;
    border-bottom: 0;
}

.caret.side {
    border: 2px solid transparent;
    border-left: 3px solid #444;
    border-right: 0;
}

.caret.up {
    border-top: 0;
    border-bottom: 3px solid #444;
}

.grip {
    flex: none;
    width: 3px;
    height: 8px;
    background: #d0d0d0;
}

.app {
    display: flex;
    flex-direction: column;
    height: 100vh;
    min-height: 500px;
    border-left: 3px solid #f2f2f2;
    overflow: hidden;
}

/* title and menus */
.head {
    display: flex;
    height: 33px;
}

.logo {
    width: 26px;
    height: 27px;
    margin-top: 2px;
    background: linear-gradient(#777, #b5b5b5);
    border: 1px solid #555;
}

.logo svg {
    flex: none;
    width: 26px;
    height: 27px;
}

.head-rows {
    flex: 1;
    min-width: 0;
}

.titlebar {
    display: flex;
    align-items: center;
    height: 18px;
}

.quick {
    display: flex;
    align-items: center;
    gap: 4px;
    padding-left: 5px;
}

.quick .more {
    border-top-color: #222;
    margin-left: 2px;
}

.doc-title {
    flex: 1;
    text-align: center;
}

.search {
    width: 114px;
    height: 14px;
    margin-left: 3px;
    padding: 0 3px;
    background: #fff;
    border: 1px solid #c8c8c8;
    font-style: italic;
}

.search::placeholder {
    color: #777;
}

.account, .store, .help {
    display: flex;
    align-items: center;
    gap: 4px;
    padding-left: 3px;
}

.account span {
    margin-left: 3px;
}

.store {
    gap: 5px;
    margin-left: 35px;
}

.help {
    margin-left: 4px;
    padding-left: 6px;
    border-left: 1px solid #c4c4c4;
}

.help .q {
    width: 11px;
    height: 11px;
    border: 1px solid #3c5a86;
    border-radius: 50%;
    color: #24467c;
    font-weight: bold;
    background: #f2f2f2;
}

.win {
    display: flex;
    align-items: center;
    gap: 8px;
    margin-left: auto;
    padding-right: 5px;
}

.help + .win {
    margin-left: 40px;
}

.win.small {
    gap: 4px;
    padding-right: 2px;
}

.menubar {
    display: flex;
    align-items: center;
    gap: 15px;
    height: 13px;
    padding-left: 8px;
    color: #666;
}

/* ribbon */
.ribbon-tabs {
    display: flex;
    height: 11px;
    padding-left: 2px;
    color: #666;
}

.ribbon-tabs button {
    padding: 0 6px;
}

.ribbon-tabs .active {
    background: #f5f5f5;
    color: #333;
}

.toggle {
    gap: 3px;
    margin-left: 6px;
}

.toggle span {
    width: 9px;
    height: 6px;
    border: 1px solid #555;
    border-radius: 2px;
    background: radial-gradient(#555 1px, #fff 1px);
}

.ribbon {
    display: grid;
    grid-template-columns: 57fr 125fr 192fr 135fr 69fr 53fr 44fr;
    height: 62px;
    margin-right: 6px;
    background: #f5f5f5;
}

.panel {
    display: flex;
    flex-direction: column;
    min-width: 0;
    border-right: 1px solid #dcdcdc;
}

.tools {
    display: flex;
    flex: 1;
    padding-top: 4px;
}

.tools.center {
    justify-content: center;
}

.big {
    flex-direction: column;
    justify-content: flex-start;
    width: 27px;
}

.big .ic {
    margin-bottom: 3px;
}

.big .caret {
    margin-top: 2px;
}

.big.wide { width: 36px; }
.big.narrow { width: 25px; }

.big.divided {
    width: 34px;
    border-right: 1px solid #dcdcdc;
}

.rows {
    display: flex;
    flex: 1;
    flex-direction: column;
    gap: 4px;
    padding-left: 6px;
}

.big.wide + .rows,
.big.narrow + .rows {
    padding-left: 2px;
}

.rows button {
    justify-content: flex-start;
    height: 12px;
    gap: 3px;
}

.panel .name {
    display: flex;
    align-items: center;
    justify-content: center;
    gap: 4px;
    height: 12px;
}

.name-row {
    display: flex;
    align-items: center;
    padding-right: 1px;
}

.name-row .name {
    flex: 1;
}

/* file tabs */
.file-tabs {
    display: flex;
    height: 15px;
    margin-top: 3px;
}

.file-tabs button {
    border-radius: 4px 4px 0 0;
    background: #e6e6e6;
}

.file-tabs .start {
    width: 80px;
    margin-left: 12px;
    padding-left: 8px;
    justify-content: flex-start;
    color: #666;
}

.file-tabs .active {
    justify-content: space-between;
    width: 78px;
    padding: 0 8px 0 6px;
    background: #f5f5f5;
}

.file-tabs .add {
    width: 20px;
    background: #e0e0e0;
    font-size: 11px;
}

/* toolbars */
.toolbars {
    display: flex;
    height: 29px;
    padding: 1px 0 2px;
    background: #f2f2f2;
}

.bar {
    display: flex;
    align-items: center;
    gap: 4px;
    height: 26px;
    padding: 2px 3px 2px 1px;
    border: 1px solid #c8c8c8;
    background: #f7f7f7;
}

.bar .grip {
    align-self: flex-start;
    margin-right: 1px;
}

.bar.layers {
    padding-right: 1px;
}

.bar.layers .grip + button {
    margin-left: -3px;
}

.sep {
    align-self: stretch;
    width: 1px;
    background: #b4b4b4;
}

.layer-box {
    display: flex;
    align-items: center;
    align-self: flex-start;
    gap: 3px;
    width: 190px;
    height: 13px;
    padding: 0 3px;
    background: #c9c9c9;
}

.layer-box select {
    flex: 1;
    appearance: none;
    color: #777;
}

.layer-box .caret {
    border-top-color: #aaa;
}

.swatch {
    width: 9px;
    height: 9px;
    background: #f0f;
    border: 1px solid #444;
}

/* work area */
.work {
    position: relative;
    flex: 1;
    display: grid;
    grid-template-columns: 25px minmax(0, 1fr) 10px 29px;
    grid-template-rows: minmax(0, 1fr) 11px;
    min-height: 0;
    padding-right: 3px;
    background: #f2f2f2;
}

.side {
    grid-row: 1 / 3;
    display: flex;
    flex-direction: column;
    align-items: center;
    min-height: 0;
    overflow: hidden;
    background: #f8f8f8;
    border: 1px solid #d0d0d0;
}

.side.right {
    grid-column: 4;
    grid-row: 1 / 3;
    margin-left: 4px;
}

.side .grip {
    width: 9px;
    height: 2px;
    margin: 1px 0 2px;
    align-self: flex-start;
}

.side button {
    height: 24px;
}

.canvas {
    position: relative;
    grid-column: 2;
    grid-row: 1;
    margin-left: 3px;
    overflow: hidden;
    background: #000;
}

.drawing {
    display: block;
    width: 100%;
    height: 100%;
}

.minor { fill: none; stroke: #888; stroke-opacity: .14; }
.major { fill: none; stroke: #999; stroke-opacity: .18; }
.cross { stroke: #d8d8d8; }
.window { fill: none; stroke: #e4f0e4; stroke-dasharray: 3 2; }
.arc-back { fill: none; stroke: #2c4a34; stroke-width: 4; stroke-linecap: round; }
.arc { fill: none; stroke: #8c8c8c; stroke-width: 3; stroke-linecap: round; }
.label-one { font: 24px Roboto, sans-serif; fill: #f0f; }
.pick { fill: none; stroke: #a8dca8; stroke-dasharray: 2 1; }
.ucs { fill: none; stroke: #ccc; }
.axis { font: 13px "Open Sans", sans-serif; fill: #ccc; }

.tip {
    position: absolute;
    left: 101px;
    top: 67px;
    padding: 1px 2px;
    border: 1px solid #ccc;
    background: #929292;
    color: #111;
    line-height: 12px;
}

.cube {
    position: absolute;
    top: 5px;
    right: 5px;
    width: 60px;
    height: 60px;
}

.cube text {
    font-size: 8px;
    fill: #aaa;
    text-anchor: middle;
}

.wcs {
    position: absolute;
    top: 73px;
    right: 21px;
    width: 30px;
    height: 11px;
    justify-content: flex-start;
    padding-left: 3px;
    border-radius: 3px;
    background: #85858d;
    color: #ccc;
}

.navbar {
    position: absolute;
    top: 100px;
    right: 2px;
    width: 21px;
    height: 135px;
    border-radius: 3px;
    background: #4a4a4a;
}

.navbar svg {
    width: 20px;
    height: 130px;
    fill: none;
    stroke: #333;
}

.history {
    position: absolute;
    left: 190px;
    bottom: 7px;
    display: flex;
    flex-direction: column;
    align-items: flex-start;
    gap: 2px;
    font-family: "Liberation Mono", "Noto Sans CJK SC", monospace;
    color: #e4e4e4;
}

.history p {
    padding: 0 1px;
    background: #505050;
}

.history .old {
    color: #aaa;
}

.scroll {
    display: flex;
    align-items: center;
    background: #f0f0f0;
}

.scroll.v {
    grid-column: 3;
    grid-row: 1;
    flex-direction: column;
}

.scroll.h {
    grid-column: 2 / 4;
    grid-row: 2;
    margin-left: 3px;
}

.scroll button {
    width: 10px;
    height: 11px;
}

.thumb {
    flex: none;
    width: 10px;
    height: 11px;
    background: #c9c9c9;
}

.v .thumb { margin-top: auto; }
.h .thumb { margin-left: auto; }

.command {
    position: absolute;
    left: 180px;
    right: 182px;
    bottom: 0;
    display: flex;
    align-items: center;
    gap: 2px;
    height: 18px;
    padding-right: 4px;
    background: #fff;
    color: #111;
    font-family: "Liberation Mono", "Noto Sans CJK SC", monospace;
}

.cmd-tools {
    display: flex;
    align-items: center;
    align-self: stretch;
    gap: 5px;
    width: 35px;
    padding-left: 2px;
    background: #d4d4d4;
}

.dotgrip {
    width: 3px;
    height: 14px;
    border-left: 1px dotted #555;
    border-right: 1px dotted #555;
}

.command label {
    margin-left: 2px;
    font-weight: bold;
}

.command input {
    flex: 1;
    min-width: 0;
}

.ring {
    position: absolute;
    left: 168px;
    bottom: -4px;
    width: 229px;
    height: 25px;
    border: 3px solid #d9303a;
    border-radius: 12px;
    pointer-events: none;
}

/* bottom */
.layout-tabs {
    display: flex;
    height: 13px;
    padding-left: 7px;
    color: #666;
}

.layout-tabs button {
    width: 33px;
    margin-right: 1px;
    height: 12px;
    border-radius: 0 0 5px 5px;
    background: #e4e4e4;
}

.layout-tabs .active {
    width: 31px;
    background: #f8f8f8;
    color: #222;
    font-weight: bold;
}

.layout-tabs .add {
    width: 16px;
    font-size: 11px;
}

.status {
    display: flex;
    justify-content: flex-end;
    height: 17px;
}

.status-items {
    display: flex;
    align-items: center;
    gap: 1px;
    padding: 0 2px;
    background: #f2f2f2;
}

.status-items button {
    width: 14px;
    height: 15px;
}

.status-items > .caret {
    margin: 0 3px;
}

.status-items .model {
    width: 18px;
    color: #222;
    font-weight: bold;
}

.status-items .on {
    background: #cfe3f5;
    border: 1px solid #86b4dc;
}

.status-items .ratio {
    gap: 2px;
    width: 22px;
}

.status-items .roomy {
    width: 18px;
}

.edge {
    display: flex;
    justify-content: flex-end;
    height: 3px;
    background: #f0f0f0;
}

.edge span {
    width: 98px;
    background: #000;
}

.edge i {
    display: block;
    width: 13px;
    height: 3px;
    margin-left: 4px;
    background: #d8604c;
}
```
